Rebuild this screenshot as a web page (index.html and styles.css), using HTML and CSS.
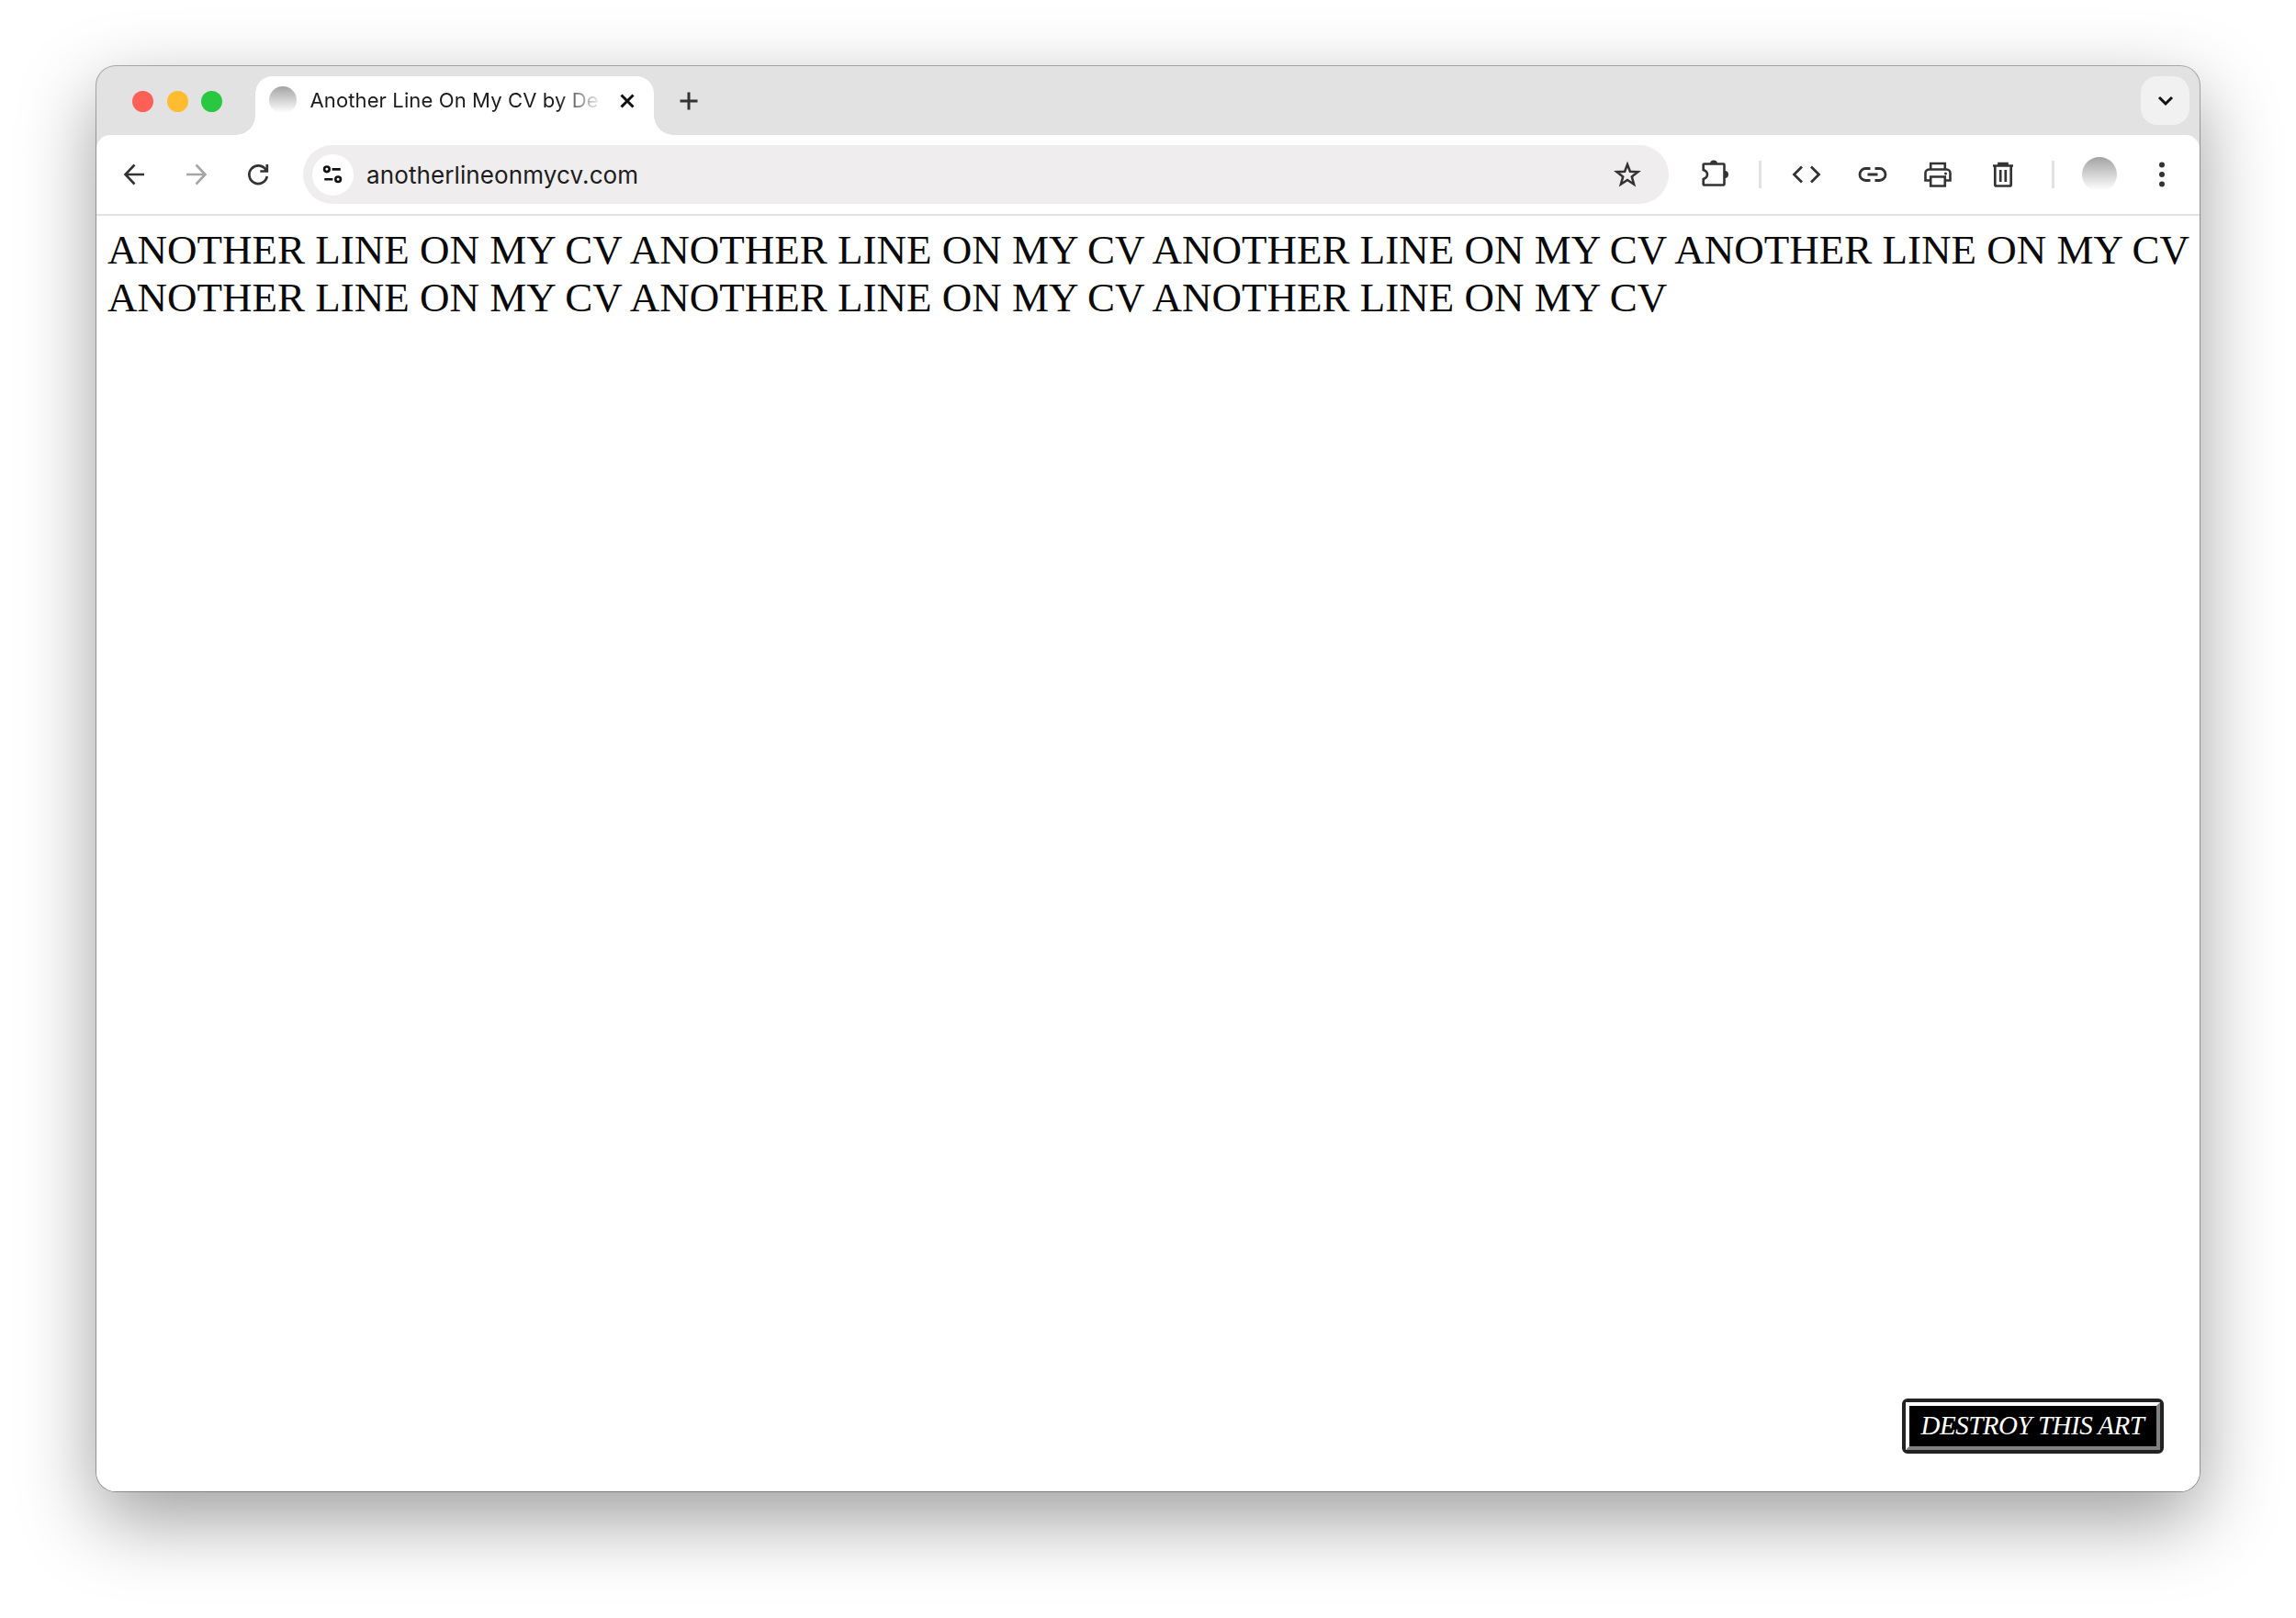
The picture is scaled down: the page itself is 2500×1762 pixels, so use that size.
FILE: index.html
```html
<!DOCTYPE html>
<html lang="en">
<head>
  <meta charset="UTF-8">
  <meta name="viewport" content="width=device-width, initial-scale=1.0">
  <title>Another Line On My CV</title>
  <link rel="stylesheet" href="styles.css">
</head>
<body>

  <div class="window">

    <header class="tab-strip">
      <div class="lights">
        <span class="light red"></span>
        <span class="light yellow"></span>
        <span class="light green"></span>
      </div>
      <div class="tab">
        <span class="favicon"></span>
        <span class="tab-title">Another Line On My CV by De</span>
        <svg class="icon tab-close" viewBox="0 0 32 32"><path d="M9.5 9.5l13 13M22.5 9.5l-13 13" stroke-width="3"/></svg>
      </div>
      <svg class="icon new-tab" viewBox="0 0 32 32"><path d="M16 6.500v19M6.500 16h19" stroke-width="3"/></svg>
      <div class="tab-search">
        <svg class="icon" viewBox="0 0 32 32"><path d="M9 12l7 7 7-7" stroke-width="3"/></svg>
      </div>
    </header>

    <nav class="toolbar">
      <div class="nav-buttons">
        <svg class="icon" viewBox="0 0 32 32"><path d="M27 16H7M16.500 5.500L6.500 16l10 10.500" stroke-width="2.600"/></svg>
        <svg class="icon disabled" viewBox="0 0 32 32"><path d="M5 16h20M15.500 5.500L25.500 16l-10 10.500" stroke-width="2.600"/></svg>
        <svg class="icon" viewBox="0 0 32 32"><path d="M24.500 11A9.800 9.800 0 1 0 25.800 18M25.800 5v7.500H18.300" stroke-width="2.700"/></svg>
      </div>

      <div class="address">
        <span class="site-info">
          <svg class="icon" viewBox="0 0 32 32"><circle cx="9" cy="9.500" r="3.200"/><path d="M15.500 9.500H26M6 22h10.500"/><circle cx="23" cy="22" r="3.200"/></svg>
        </span>
        <span class="url">anotherlineonmycv.com</span>
        <svg class="icon star" viewBox="0 0 32 32"><path d="M16 5l2.900 7.800 8.600.4-6.700 5.200 2.300 8.300-7.100-4.700-7.100 4.700 2.300-8.300-6.700-5.200 8.600-.4z" stroke-width="2.500"/></svg>
      </div>

      <div class="extensions">
        <svg class="icon" viewBox="0 0 32 32"><path d="M4 4.500H24.500q1 0 1 1V26.500q0 1-1 1H4q-1.300 0-1.300-1V21Q7 19.500 7 16T2.700 11V5.500q0-1 1.300-1z"/><path class="solid" d="M10 4.500a4 4 0 0 1 8 0zM26 12a4 4 0 0 1 0 8z"/></svg>
        <span class="divider"></span>
        <svg class="icon" viewBox="0 0 32 32"><path d="M11 7.500L2.500 16l8.500 8.500M21 7.500l8.500 8.500-8.500 8.500" stroke-width="2.800"/></svg>
        <svg class="icon" viewBox="0 0 32 32"><path d="M13.500 9.500H8.500a6.500 6.500 0 0 0 0 13h5M18.500 9.500h5a6.500 6.500 0 0 1 0 13h-5M10.500 16h11" stroke-width="2.800"/></svg>
        <svg class="icon" viewBox="0 0 32 32"><path d="M8.200 10.500V4h15.600v6.500M7.500 22.500H2.500V14.500a4 4 0 0 1 4-4h19a4 4 0 0 1 4 4v8H24.500M8.200 18.500h15.600v10H8.200z" stroke-width="2.600"/><circle class="solid" cx="24.500" cy="15" r="1.500"/></svg>
        <svg class="icon" viewBox="0 0 32 32"><path d="M5 6.500h22M11.500 5.500V4h9v1.500M7.300 7v20q0 1.500 1.500 1.500h14.400q1.500 0 1.500-1.500V7M13.200 11v13M18.800 11v13" stroke-width="2.700"/></svg>
        <span class="divider last"></span>
        <span class="avatar"></span>
        <svg class="icon" viewBox="0 0 32 32"><circle class="solid" cx="16" cy="5.500" r="3"/><circle class="solid" cx="16" cy="16" r="3"/><circle class="solid" cx="16" cy="26.500" r="3"/></svg>
      </div>
    </nav>

    <main class="page">
      <p class="lines">ANOTHER LINE ON MY CV ANOTHER LINE ON MY CV ANOTHER LINE ON MY CV ANOTHER LINE ON MY CV ANOTHER LINE ON MY CV ANOTHER LINE ON MY CV ANOTHER LINE ON MY CV</p>
      <button class="destroy"><span>DESTROY THIS ART</span></button>
    </main>

  </div>

</body>
</html>
```
FILE: styles.css
```css
* {
  box-sizing: border-box;
}

body {
  margin: 0;
  height: 1762px;
  padding: 72px 0 0 105px;
  background: #fff;
  font-family: Inter, "Liberation Sans", sans-serif;
  overflow: hidden;
}

.window {
  display: flex;
  flex-direction: column;
  width: 2290px;
  height: 1552px;
  border-radius: 21px;
  background: #e2e2e2;
  overflow: hidden;
  box-shadow: 0 0 0 1px rgba(0, 0, 0, 0.3), 0 30px 84px rgba(0, 0, 0, 0.39);
}

.icon {
  display: block;
  flex: none;
  width: 32px;
  height: 32px;
  fill: none;
  stroke: #333;
  stroke-width: 2.6;
}

.icon .solid {
  fill: #333;
  stroke: none;
}

.icon.disabled {
  stroke: #a6a6a6;
}

/* tab strip */
.tab-strip {
  display: flex;
  height: 75px;
  flex: none;
  padding: 11px 11px 0 39px;
}

.lights {
  display: flex;
  gap: 14.5px;
  margin-top: 16px;
}

.light {
  width: 23px;
  height: 23px;
  border-radius: 50%;
}

.red {
  background: #fe5f57;
}

.yellow {
  background: #febc2e;
}

.green {
  background: #28c840;
}

.tab {
  position: relative;
  display: flex;
  width: 434px;
  height: 64px;
  margin-left: 36px;
  padding: 11px 13px 0 15px;
  background: #fff;
  border-radius: 19px 19px 0 0;
}

/* curved feet on both sides of the tab */
.tab::before,
.tab::after {
  content: "";
  position: absolute;
  bottom: 0;
  width: 21px;
  height: 21px;
}

.tab::before {
  left: -21px;
  background: radial-gradient(circle at 0 0, transparent 20.5px, #fff 21px);
}

.tab::after {
  right: -21px;
  background: radial-gradient(circle at 100% 0, transparent 20.5px, #fff 21px);
}

.favicon,
.avatar {
  flex: none;
  border-radius: 50%;
  background: linear-gradient(#a3a3a3, #fff 96%);
}

.favicon {
  width: 30px;
  height: 30px;
}

.tab-title {
  width: 316px;
  margin-left: 14.5px;
  font-size: 22px;
  letter-spacing: 0.12px;
  line-height: 31px;
  color: #1c1c1c;
  white-space: nowrap;
  overflow: hidden;
  -webkit-mask-image: linear-gradient(to right, #000 270px, transparent 318px);
  mask-image: linear-gradient(to right, #000 270px, transparent 318px);
}

.tab-close {
  margin-left: 13px;
  stroke: #111;
}

.new-tab {
  margin: 11px 0 0 22px;
}

.tab-search {
  display: flex;
  align-items: center;
  justify-content: center;
  width: 53px;
  height: 53px;
  margin-left: auto;
  border-radius: 18px;
  background: #f1f1f1;
}

.tab-search .icon {
  stroke: #111;
}

/* toolbar */
.toolbar {
  display: flex;
  align-items: center;
  flex: none;
  height: 88px;
  padding: 0 25.5px 0 25px;
  background: #fff;
  border-bottom: 2px solid #e3e3e3;
  border-radius: 15px 15px 0 0;
}

.nav-buttons {
  display: flex;
  gap: 35.5px;
}

.address {
  display: flex;
  align-items: center;
  flex: 1;
  height: 64px;
  margin: 0 35px 0 32.5px;
  padding: 0 29px 0 10px;
  border-radius: 32px;
  background: #f0edee;
}

.site-info {
  display: flex;
  align-items: center;
  justify-content: center;
  width: 45px;
  height: 45px;
  border-radius: 50%;
  background: #fff;
}

.site-info .icon {
  width: 28px;
  height: 28px;
  stroke: #111;
  stroke-width: 3;
}

.url {
  margin-left: 14.5px;
  font-size: 26px;
  letter-spacing: 0.11px;
  color: #1c1c1c;
}

.star {
  margin-left: auto;
}

.extensions {
  display: flex;
  align-items: center;
  gap: 39.3px;
}

.divider {
  width: 3px;
  height: 30px;
  margin: 0 -6.5px 0 -7.5px;
  background: #e2e2e2;
}

.divider.last {
  margin: 0 -7px 0 -2.5px;
}

.avatar {
  width: 38px;
  height: 38px;
  margin: 0 -7px 0 -2px;
}

/* page */
.page {
  display: flex;
  flex-direction: column;
  flex: 1;
  padding: 12px 0 41px 12px;
  background: #fff;
}

.lines {
  margin: 0;
  font-family: "Liberation Serif", serif;
  font-size: 45px;
  line-height: 51.5px;
  color: #0a0a0a;
}

.destroy {
  align-self: flex-end;
  margin: auto 39.5px 0 0;
  width: 285px;
  height: 60px;
  padding: 0;
  border: 4px solid #222;
  border-radius: 6px;
  background: #000;
  color: #fff;
  font-family: "Liberation Serif", serif;
  font-style: italic;
  font-size: 29px;
  letter-spacing: -0.5px;
}

.destroy span {
  display: flex;
  align-items: center;
  justify-content: center;
  height: 52px;
  padding-bottom: 2px;
  border: 4px solid;
  border-color: #fff #808080 #808080 #fff;
  white-space: nowrap;
}
```
